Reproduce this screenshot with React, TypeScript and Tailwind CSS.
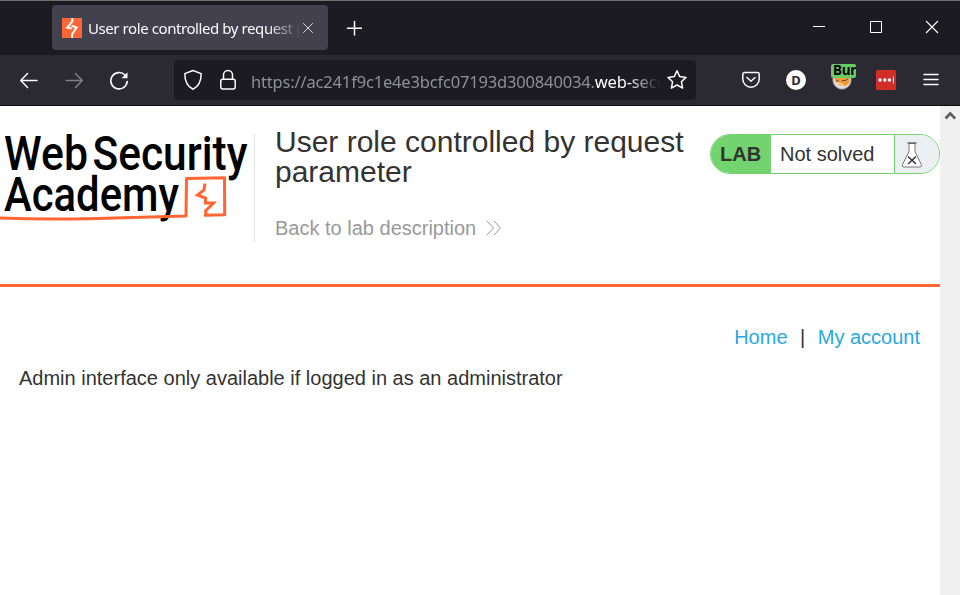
import React from "react";

const stroke = {
  fill: "none",
  stroke: "#fbfbfe",
  strokeWidth: 1.5,
  strokeLinecap: "round" as const,
  strokeLinejoin: "round" as const,
};

function TabBar() {
  return (
    <div className="flex h-[54px] shrink-0 items-start bg-[#1c1b22] pl-[52px]">
      <div className="mt-1 flex h-[45px] w-[276px] items-center rounded-[4px] bg-[#42414d] pl-[10px] text-[#fbfbfe]">
        <svg width="20" height="20" viewBox="0 0 20 20" className="shrink-0">
          <rect width="20" height="20" fill="#ff6633" />
          <path d="M10.300 0v3.500L5.300 9.600l4.500 1M9.500 7.800l5 1.800-4.400 6.600V20" fill="none" stroke="#fff" strokeWidth="2" />
        </svg>
        <div className="ml-[6px] w-[213px] overflow-hidden whitespace-nowrap font-['Noto_Sans',sans-serif] text-[15px] leading-[22px] tracking-[-0.42px] [mask-image:linear-gradient(to_right,#000_84%,transparent_100%)]">
          User role controlled by request parameter
        </div>
        <svg width="12" height="12" viewBox="0 0 12 12" className="ml-[1px] shrink-0">
          <path d="M1.500 1.500l9 9M10.500 1.500l-9 9" {...stroke} strokeWidth={1} stroke="#d8d8de" />
        </svg>
      </div>
      <svg width="16" height="16" viewBox="0 0 16 16" className="ml-[18px] mt-[19px]">
        <path d="M8.500 1.500v13.500M1.500 8.200h14" {...stroke} />
      </svg>
      <div className="ml-auto mr-[21px] mt-[19px] flex">
        <svg width="14" height="14" viewBox="0 0 14 14">
          <path d="M1 6.500h12" stroke="#fff" />
        </svg>
        <svg width="14" height="14" viewBox="0 0 14 14" className="ml-[43px]">
          <path d="M1.500 1.500h11v11h-11z" fill="none" stroke="#fff" />
        </svg>
        <svg width="14" height="14" viewBox="0 0 14 14" className="ml-[42px]">
          <path d="M1 1l12 12M13 1L1 13" stroke="#fff" strokeWidth="1.1" />
        </svg>
      </div>
    </div>
  );
}

function NavBar() {
  return (
    <div className="flex h-[51px] shrink-0 items-center border-b border-[#0c0c0f] bg-[#2b2a33] pl-[19px] pr-[20px]">
      <svg width="20" height="20" viewBox="0 0 20 20">
        <path d="M18 10.500H2M8.500 3.500L1.800 10.500l6.700 7" {...stroke} />
      </svg>
      <svg width="20" height="20" viewBox="0 0 20 20" className="ml-[25px] opacity-40">
        <path d="M2 10.500h16M11.500 3.500l6.700 7-6.700 7" {...stroke} />
      </svg>
      <svg width="20" height="20" viewBox="0 0 20 20" className="ml-[25px]">
        <path d="M18.200 11.500a8.200 8.200 0 1 1-2.300-6.500L17 6.700" {...stroke} strokeWidth={1.7} />
        <path d="M18.500 2.300v6h-6z" fill="#fbfbfe" />
      </svg>
      <div className="ml-[45px] flex h-10 w-[522px] items-center rounded-[4px] bg-[#1c1b22] pl-[9px] pr-[8px]">
        <svg width="20" height="22" viewBox="0 0 20 22">
          <path d="M10 1.500L18.200 4.600C18.200 12 16 17.500 10 20.300 4 17.500 1.800 12 1.800 4.600z" {...stroke} />
        </svg>
        <svg width="18" height="22" viewBox="0 0 18 22" className="ml-[16px]">
          <path d="M4.500 10V6a4.500 4.500 0 0 1 9 0v4" {...stroke} />
          <rect x="1.800" y="10.200" width="14.400" height="9.800" rx="2" {...stroke} />
        </svg>
        <div className="ml-[14px] w-[409px] overflow-hidden whitespace-nowrap pt-1 font-['Noto_Sans',sans-serif] text-[16.500px] leading-[24px] tracking-[-0.17px] text-[#8f8f97] [mask-image:linear-gradient(to_right,#000_92%,transparent_100%)]">
          https://ac241f9c1e4e3bcfc07193d300840034.<span className="text-[#fbfbfe]">web-security-academy.net</span>
        </div>
        <svg width="22" height="22" viewBox="0 0 22 22" className="ml-[6px] shrink-0">
          <path d="M11 1.800l2.700 5.800 6.300.8-4.600 4.300 1.200 6.400L11 16l-5.600 3.100 1.200-6.400L2 8.400l6.300-.8z" {...stroke} />
        </svg>
      </div>
      <div className="ml-auto flex items-center">
        <svg width="20" height="20" viewBox="0 0 20 20">
          <path d="M3.500 2.500h13a1.700 1.700 0 0 1 1.700 1.700V9a8.200 8.200 0 0 1-16.400 0V4.200a1.700 1.700 0 0 1 1.700-1.700zM6 7.500l4 3.800 4-3.800" {...stroke} />
        </svg>
        <div className="ml-[25px] flex size-5 items-center justify-center rounded-full bg-white font-['Noto_Sans',sans-serif] text-[13px] font-bold leading-[18px] text-[#2b2a33]">
          <span className="pb-px">D</span>
        </div>
        <div className="relative ml-[25px] h-[32px] w-[26px]">
          <svg width="22" height="20" viewBox="0 0 22 20" className="absolute left-0 top-[7px]">
            <circle cx="11" cy="9" r="9.300" fill="#dedad6" stroke="#777" strokeWidth=".7" />
            <path d="M3 6h16l-1 6.500-5 3-8-3z" fill="#f39a32" />
            <path d="M5 9l3 1.500M11 9.500h3l3-1.500" stroke="#6b4a32" fill="none" />
            <path d="M5 12.500c3-1 6 0 8 3" stroke="#fff" fill="none" />
          </svg>
          <div className="absolute left-0 top-0 h-[14px] w-[25px] overflow-hidden rounded-[2px] bg-[#66cc66] pl-[2px] font-['Open_Sans',sans-serif] text-[13.500px] font-bold leading-[13px] tracking-[-0.3px] text-black">Burp</div>
        </div>
        <svg width="20" height="20" viewBox="0 0 20 20" className="ml-[19px]">
          <rect width="20" height="20" rx="1.500" fill="#d32d27" />
          <circle cx="4" cy="10" r="1.800" fill="#fff" />
          <circle cx="8.800" cy="10" r="1.800" fill="#fff" />
          <circle cx="13.500" cy="10" r="1.800" fill="#fff" />
          <path d="M17.500 6.500v7" stroke="#fff" />
        </svg>
        <svg width="18" height="16" viewBox="0 0 18 16" className="ml-[26px]">
          <path d="M2 2.500h14M2 7.500h14M2 12.500h14" {...stroke} />
        </svg>
      </div>
    </div>
  );
}

function Logo() {
  return (
    <svg width="254" height="108" viewBox="0 0 254 108" fontFamily="Roboto, sans-serif" fontWeight="500" fontSize="48.500">
      <g fill="#000">
        <text x="4" y="36" textLength="84" lengthAdjust="spacingAndGlyphs">Web</text>
        <text x="92.500" y="36" textLength="155" lengthAdjust="spacingAndGlyphs">Security</text>
        <text x="4" y="77" textLength="175" lengthAdjust="spacingAndGlyphs">Academy</text>
      </g>
      <g fill="none" stroke="#ff6633">
        <path d="M0 84c35 1.500 62 1.300 88 .7S140 83 186 82l.500-37.500 38-.8.200 37-20.700.5" strokeWidth="3" strokeLinejoin="round" />
        <path d="M205 49.500l-1 6.500-6.500 5 8 3v5h8l-8 8 1 5" strokeWidth="3" />
      </g>
    </svg>
  );
}

function LabStatus() {
  return (
    <div className="mt-[28px] flex h-10 w-[230px] shrink-0 overflow-hidden rounded-full border border-[#72d36f] bg-white text-[20px] leading-[38px] text-[#333332]">
      <div className="w-[60px] bg-[#72d36f] pl-[9px] font-bold">LAB</div>
      <div className="flex-1 whitespace-nowrap pl-[9px]">Not solved</div>
      <div className="w-[45px] border-l border-[#72d36f] bg-[#ebeff2]">
        <svg width="22" height="28" viewBox="0 0 22 28" className="ml-[6px] mt-[6px]">
          <path d="M8 2.500v8L1.500 23.500q-.7 2.500 1.500 2.500h16q2 0 1.300-2.500L14 10.500v-8z" fill="#fff" stroke="#777" />
          <path d="M6.500 2h9" stroke="#666" strokeWidth="1.300" />
          <path d="M7 15.500l8 7.500M15 15.500L7 23" stroke="#333" strokeWidth="1.500" />
        </svg>
      </div>
    </div>
  );
}

function Page() {
  return (
    <main className="min-w-0 flex-1 bg-white text-[20px] text-[#333332]">
      <header className="flex h-[181px] border-b-[3px] border-[#ff6633]">
        <div className="mt-[28px] h-[108px] w-[255px] shrink-0 border-r border-[#e3e3e3]">
          <Logo />
        </div>
        <div className="ml-5 mt-[21px] w-[435px] shrink-0">
          <h2 className="text-[30px] leading-[30px]">User role controlled by request<br />parameter</h2>
          <a className="mt-[29px] flex items-center leading-[24px] text-[#999999]">
            Back to lab description
            <svg width="16" height="16" viewBox="0 0 16 16" className="ml-[10px]">
              <path d="M1 1l6.500 7L1 15M8 1l6.500 7L8 15" fill="none" stroke="#999" />
            </svg>
          </a>
        </div>
        <LabStatus />
      </header>
      <nav className="mr-5 mt-[38px] flex justify-end leading-6 text-[#29a8e0]">
        <a>Home</a>
        <span className="ml-[12.500px] mr-[12.500px] text-[#333332]">|</span>
        <a>My account</a>
      </nav>
      <p className="ml-[19px] mt-[17px] leading-6">Admin interface only available if logged in as an administrator</p>
    </main>
  );
}

export default function App() {
  return (
    <div className="flex h-[595px] w-[960px] flex-col overflow-hidden border-t border-[#707070] font-['Liberation_Sans',Arial,sans-serif]">
      <TabBar />
      <NavBar />
      <div className="flex min-h-0 flex-1">
        <Page />
        <div className="flex w-5 shrink-0 justify-center bg-[#f0f0f0] pt-[4px]">
          <svg width="12" height="12" viewBox="0 0 12 12">
            <path d="M1.500 8.500L6.300 3.500l4.800 5" fill="none" stroke="#606060" strokeWidth="2.600" />
          </svg>
        </div>
      </div>
    </div>
  );
}
